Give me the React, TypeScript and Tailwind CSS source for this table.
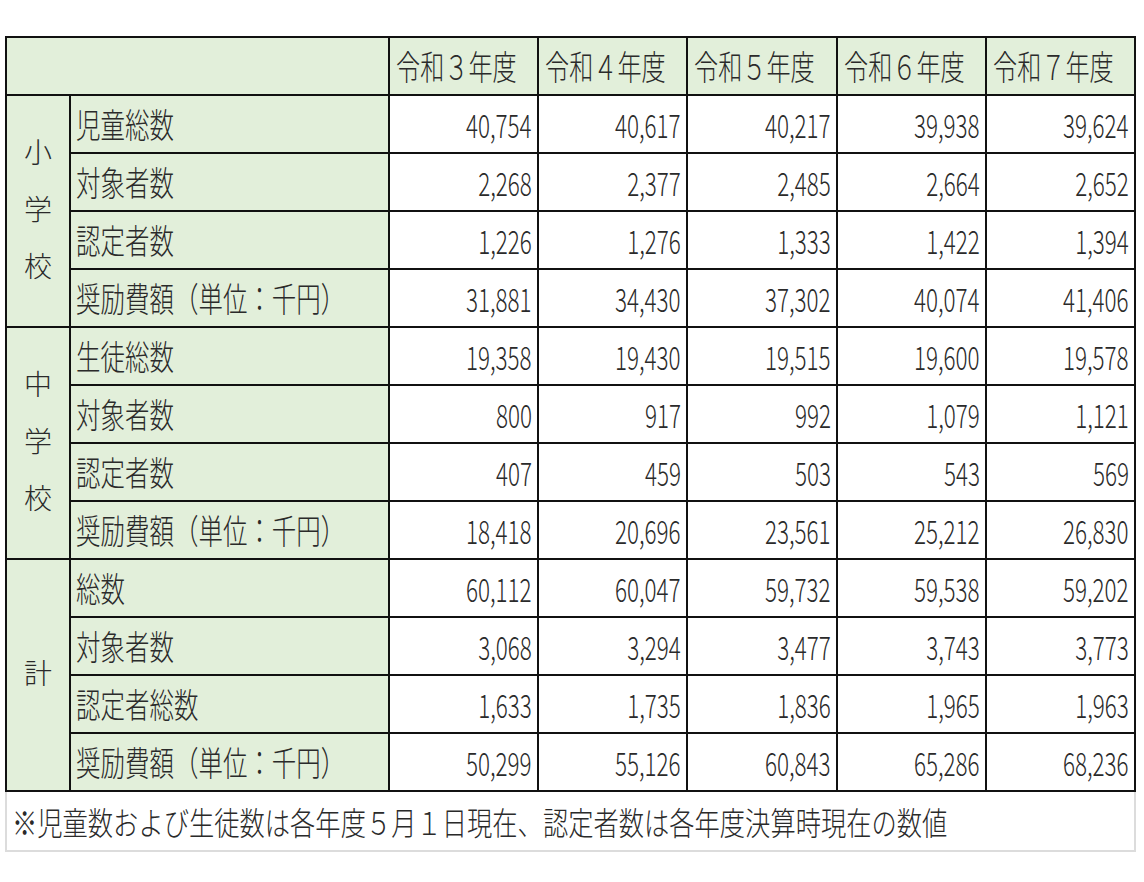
const years = ["令和３年度", "令和４年度", "令和５年度", "令和６年度", "令和７年度"];

const groups = [
  {
    name: ["小", "学", "校"],
    rows: [
      { label: "児童総数", values: ["40,754", "40,617", "40,217", "39,938", "39,624"] },
      { label: "対象者数", values: ["2,268", "2,377", "2,485", "2,664", "2,652"] },
      { label: "認定者数", values: ["1,226", "1,276", "1,333", "1,422", "1,394"] },
      { label: "奨励費額（単位：千円）", values: ["31,881", "34,430", "37,302", "40,074", "41,406"] },
    ],
  },
  {
    name: ["中", "学", "校"],
    rows: [
      { label: "生徒総数", values: ["19,358", "19,430", "19,515", "19,600", "19,578"] },
      { label: "対象者数", values: ["800", "917", "992", "1,079", "1,121"] },
      { label: "認定者数", values: ["407", "459", "503", "543", "569"] },
      { label: "奨励費額（単位：千円）", values: ["18,418", "20,696", "23,561", "25,212", "26,830"] },
    ],
  },
  {
    name: ["計"],
    rows: [
      { label: "総数", values: ["60,112", "60,047", "59,732", "59,538", "59,202"] },
      { label: "対象者数", values: ["3,068", "3,294", "3,477", "3,743", "3,773"] },
      { label: "認定者総数", values: ["1,633", "1,735", "1,836", "1,965", "1,963"] },
      { label: "奨励費額（単位：千円）", values: ["50,299", "55,126", "60,843", "65,286", "68,236"] },
    ],
  },
];

const font = "font-['Noto_Sans_CJK_JP','Noto_Sans',sans-serif]";

const App = () => {
  return (
    <div className={`min-h-screen bg-white pt-[36px] pl-[5px] font-light text-[#2a2a2a] ${font}`}>
      {/* Table */}
      <div className="grid w-max grid-cols-[62px_317px_147px_147px_148px_147px_147px] gap-[2px] bg-[#111] p-[2px]">
        <div className="col-span-2 h-[56px] bg-[#e2efda]" />
        {years.map((y) => (
          <div key={y} className="flex h-[56px] items-center bg-[#e2efda] pl-[6px]">
            <span className="inline-block origin-left scale-x-[0.71] whitespace-nowrap text-[34px] leading-none">
              {y}
            </span>
          </div>
        ))}

        {groups.map((g) =>
          g.rows.map((row, i) => (
            <>
              {i === 0 && (
                <div
                  key={g.name.join("")}
                  className="col-start-1 row-span-4 flex flex-col items-center justify-center bg-[#e2efda] pb-[6px]"
                >
                  {g.name.map((c, j) => (
                    <span key={j} className="text-[28px] leading-[57px]">
                      {c}
                    </span>
                  ))}
                </div>
              )}
              <div className="col-start-2 flex h-[56px] items-center bg-[#e2efda] pl-[5px]">
                <span className="inline-block origin-left scale-x-[0.72] whitespace-nowrap text-[34px] leading-none">
                  {row.label}
                </span>
              </div>
              {row.values.map((v, k) => (
                <div key={k} className="flex h-[56px] items-center justify-end bg-white pr-[5px]">
                  <span className="inline-block origin-right scale-x-[0.68] whitespace-nowrap text-[33px] leading-none">
                    {v}
                  </span>
                </div>
              ))}
            </>
          ))
        )}
      </div>

      {/* Footnote */}
      <div className="flex h-[60px] w-[1131px] items-center border-2 border-t-0 border-[#dcdcdc] bg-white pl-[5px]">
        <span className="inline-block origin-left scale-x-[0.79] whitespace-nowrap text-[32px] leading-none">
          ※児童数および生徒数は各年度５月１日現在、認定者数は各年度決算時現在の数値
        </span>
      </div>
    </div>
  );
};

export default App;
